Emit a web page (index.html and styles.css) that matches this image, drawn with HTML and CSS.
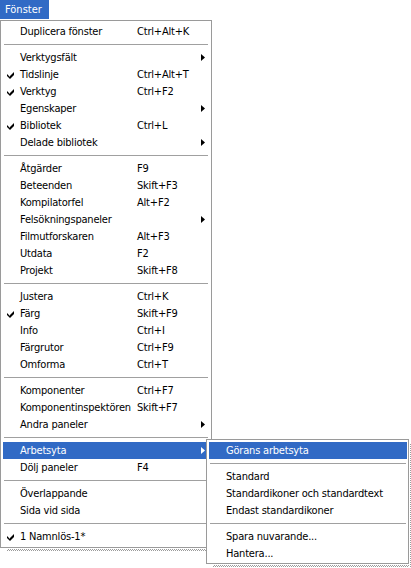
FILE: index.html
```html
<!DOCTYPE html>
<html lang="sv">
<head>
<meta charset="utf-8">
<title>Fönster</title>
<link rel="stylesheet" href="styles.css">
</head>
<body>
<div class="screen">
  <div class="menubar"><span class="menutitle">Fönster</span></div>

  <div class="menu main">
    <div class="item"><span class="check"></span><span class="label">Duplicera fönster</span><span class="key">Ctrl+Alt+K</span><span class="arrow"></span></div>
    <div class="sep"></div>
    <div class="item"><span class="check"></span><span class="label">Verktygsfält</span><span class="key"></span><span class="arrow"><svg viewBox="0 0 4 7" width="4" height="7"><polygon points="0,0 4,3.5 0,7"/></svg></span></div>
    <div class="item"><span class="check"><svg viewBox="0 0 7 7" width="7" height="7"><path d="M0 2.5h1v1h1v1h1v-1h1v-1h1v-1h1v-1h1v3h-1v1h-1v1h-1v1h-2v-1h-1v-1h-1z"/></svg></span><span class="label">Tidslinje</span><span class="key">Ctrl+Alt+T</span><span class="arrow"></span></div>
    <div class="item"><span class="check"><svg viewBox="0 0 7 7" width="7" height="7"><path d="M0 2.5h1v1h1v1h1v-1h1v-1h1v-1h1v-1h1v3h-1v1h-1v1h-1v1h-2v-1h-1v-1h-1z"/></svg></span><span class="label">Verktyg</span><span class="key">Ctrl+F2</span><span class="arrow"></span></div>
    <div class="item"><span class="check"></span><span class="label">Egenskaper</span><span class="key"></span><span class="arrow"><svg viewBox="0 0 4 7" width="4" height="7"><polygon points="0,0 4,3.5 0,7"/></svg></span></div>
    <div class="item"><span class="check"><svg viewBox="0 0 7 7" width="7" height="7"><path d="M0 2.5h1v1h1v1h1v-1h1v-1h1v-1h1v-1h1v3h-1v1h-1v1h-1v1h-2v-1h-1v-1h-1z"/></svg></span><span class="label">Bibliotek</span><span class="key">Ctrl+L</span><span class="arrow"></span></div>
    <div class="item"><span class="check"></span><span class="label">Delade bibliotek</span><span class="key"></span><span class="arrow"><svg viewBox="0 0 4 7" width="4" height="7"><polygon points="0,0 4,3.5 0,7"/></svg></span></div>
    <div class="sep"></div>
    <div class="item"><span class="check"></span><span class="label">Åtgärder</span><span class="key">F9</span><span class="arrow"></span></div>
    <div class="item"><span class="check"></span><span class="label">Beteenden</span><span class="key">Skift+F3</span><span class="arrow"></span></div>
    <div class="item"><span class="check"></span><span class="label">Kompilatorfel</span><span class="key">Alt+F2</span><span class="arrow"></span></div>
    <div class="item"><span class="check"></span><span class="label">Felsökningspaneler</span><span class="key"></span><span class="arrow"><svg viewBox="0 0 4 7" width="4" height="7"><polygon points="0,0 4,3.5 0,7"/></svg></span></div>
    <div class="item"><span class="check"></span><span class="label">Filmutforskaren</span><span class="key">Alt+F3</span><span class="arrow"></span></div>
    <div class="item"><span class="check"></span><span class="label">Utdata</span><span class="key">F2</span><span class="arrow"></span></div>
    <div class="item"><span class="check"></span><span class="label">Projekt</span><span class="key">Skift+F8</span><span class="arrow"></span></div>
    <div class="sep"></div>
    <div class="item"><span class="check"></span><span class="label">Justera</span><span class="key">Ctrl+K</span><span class="arrow"></span></div>
    <div class="item"><span class="check"><svg viewBox="0 0 7 7" width="7" height="7"><path d="M0 2.5h1v1h1v1h1v-1h1v-1h1v-1h1v-1h1v3h-1v1h-1v1h-1v1h-2v-1h-1v-1h-1z"/></svg></span><span class="label">Färg</span><span class="key">Skift+F9</span><span class="arrow"></span></div>
    <div class="item"><span class="check"></span><span class="label">Info</span><span class="key">Ctrl+I</span><span class="arrow"></span></div>
    <div class="item"><span class="check"></span><span class="label">Färgrutor</span><span class="key">Ctrl+F9</span><span class="arrow"></span></div>
    <div class="item"><span class="check"></span><span class="label">Omforma</span><span class="key">Ctrl+T</span><span class="arrow"></span></div>
    <div class="sep"></div>
    <div class="item"><span class="check"></span><span class="label">Komponenter</span><span class="key">Ctrl+F7</span><span class="arrow"></span></div>
    <div class="item"><span class="check"></span><span class="label">Komponentinspektören</span><span class="key">Skift+F7</span><span class="arrow"></span></div>
    <div class="item"><span class="check"></span><span class="label">Andra paneler</span><span class="key"></span><span class="arrow"><svg viewBox="0 0 4 7" width="4" height="7"><polygon points="0,0 4,3.5 0,7"/></svg></span></div>
    <div class="sep"></div>
    <div class="item active"><span class="check"></span><span class="label">Arbetsyta</span><span class="key"></span><span class="arrow"><svg viewBox="0 0 4 7" width="4" height="7"><polygon points="0,0 4,3.5 0,7"/></svg></span></div>
    <div class="item"><span class="check"></span><span class="label">Dölj paneler</span><span class="key">F4</span><span class="arrow"></span></div>
    <div class="sep"></div>
    <div class="item"><span class="check"></span><span class="label">Överlappande</span><span class="key"></span><span class="arrow"></span></div>
    <div class="item"><span class="check"></span><span class="label">Sida vid sida</span><span class="key"></span><span class="arrow"></span></div>
    <div class="sep"></div>
    <div class="item"><span class="check"><svg viewBox="0 0 7 7" width="7" height="7"><path d="M0 2.5h1v1h1v1h1v-1h1v-1h1v-1h1v-1h1v3h-1v1h-1v1h-1v1h-2v-1h-1v-1h-1z"/></svg></span><span class="label">1 Namnlös-1*</span><span class="key"></span><span class="arrow"></span></div>
  </div>

  <div class="menu sub">
    <div class="item active"><span class="check"></span><span class="label">Görans arbetsyta</span></div>
    <div class="sep"></div>
    <div class="item"><span class="check"></span><span class="label">Standard</span></div>
    <div class="item"><span class="check"></span><span class="label">Standardikoner och standardtext</span></div>
    <div class="item"><span class="check"></span><span class="label">Endast standardikoner</span></div>
    <div class="sep"></div>
    <div class="item"><span class="check"></span><span class="label">Spara nuvarande...</span></div>
    <div class="item"><span class="check"></span><span class="label">Hantera...</span></div>
  </div>
</div>
</body>
</html>
```

FILE: styles.css
```css
html, body {
  margin: 0;
  padding: 0;
  background: #ffffff;
}

.screen {
  position: relative;
  width: 411px;
  height: 568px;
  overflow: hidden;
  font-family: "DejaVu Sans Condensed", "DejaVu Sans", sans-serif;
  font-stretch: condensed;
  font-size: 11px;
  letter-spacing: -0.2px;
  color: #000000;
}

.menubar {
  height: 20px;
  display: flex;
  align-items: flex-start;
}

.menutitle {
  display: block;
  height: 19px;
  line-height: 19px;
  width: 49px;
  padding-left: 5px;
  box-sizing: border-box;
  background: #316ac5;
  color: #ffffff;
  font-size: 11px;
  letter-spacing: 0;
}

.menu {
  position: relative;
  background: #ffffff;
  border: 1px solid #9a9a9a;
  box-sizing: border-box;
}

.menu::after {
  content: "";
  position: absolute;
  left: 6px;
  right: -1px;
  bottom: -4px;
  height: 2px;
  background: repeating-conic-gradient(#9a9a9a 0 25%, #ffffff 0 50%) 0 0 / 2px 2px;
}

.main {
  width: 212px;
  padding: 2px 2px 2px 2px;
}

.sub {
  position: absolute;
  left: 206px;
  top: 439px;
  width: 203px;
  padding: 2px 1px 1px 2px;
}

.sub::before {
  content: "";
  position: absolute;
  top: 3px;
  right: -4px;
  width: 2px;
  bottom: -4px;
  background: repeating-conic-gradient(#9a9a9a 0 25%, #ffffff 0 50%) 0 0 / 2px 2px;
}

.item {
  height: 17px;
  line-height: 17px;
  display: grid;
  grid-template-columns: 17px 117px 1fr 4px;
  padding-right: 4px;
  white-space: nowrap;
}

.sub .item {
  grid-template-columns: 17px 1fr;
}

.item.active {
  background: #316ac5;
  color: #ffffff;
}

.check {
  display: flex;
  align-items: center;
  padding-left: 4px;
  padding-top: 1px;
}

.check svg {
  fill: #000000;
  display: block;
}

.label {
  overflow: visible;
}

.arrow {
  display: flex;
  align-items: center;
}

.arrow svg {
  display: block;
  fill: #000000;
}

.active .arrow svg,
.active .check svg {
  fill: #ffffff;
}

.sep {
  height: 9px;
  display: flex;
  align-items: center;
  padding: 0 1px;
}

.sep::before {
  content: "";
  display: block;
  flex: 1;
  height: 1px;
  background: #a0a0a0;
}
```
